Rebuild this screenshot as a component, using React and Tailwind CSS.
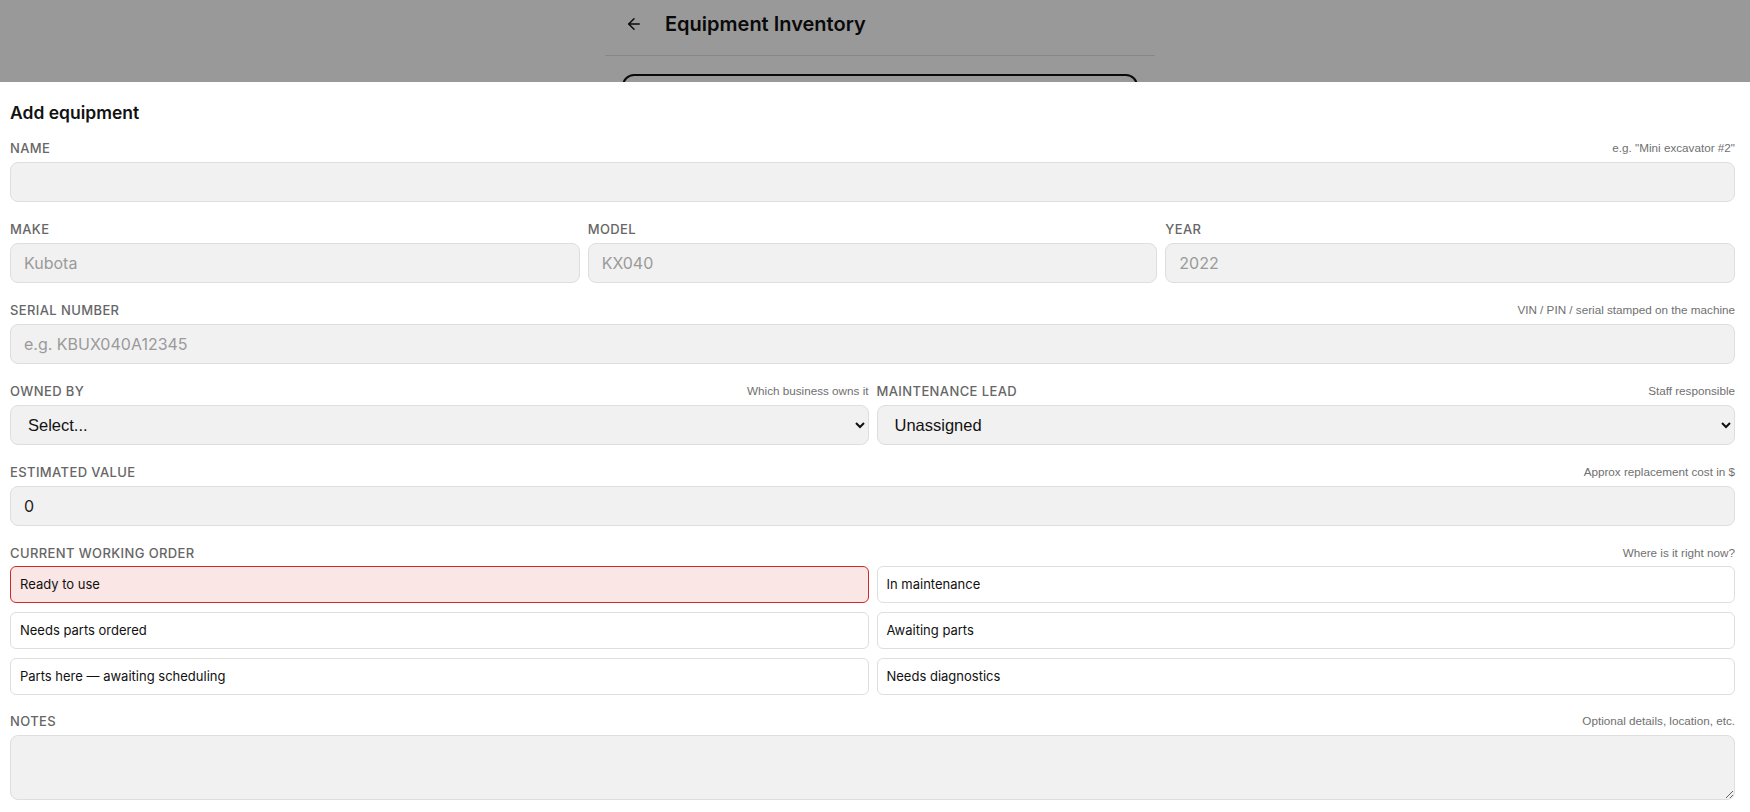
import React from "react";
import { ArrowLeft } from "lucide-react";

const inter = { fontFamily: "Inter, 'Noto Sans', sans-serif" };
const arial = { fontFamily: "'Liberation Sans', Arial, sans-serif" };

function FieldLabel({ label, hint, className = "mb-[6px]" }) {
  return (
    <div className={`flex h-4 items-end justify-between ${className}`}>
      <span
        className="text-[13px] font-medium uppercase leading-4 tracking-[0.03em] text-[#666]"
        style={inter}
      >
        {label}
      </span>
      {hint && (
        <span className="text-[11.7px] leading-4 text-[#707070]" style={arial}>
          {hint}
        </span>
      )}
    </div>
  );
}

function TextInput({ placeholder, value }) {
  return (
    <input
      type="text"
      placeholder={placeholder}
      defaultValue={value}
      className="h-10 w-full rounded-lg border border-[#dedede] bg-[#f1f1f1] px-[13px] text-base text-[#222] placeholder:text-[#9a9a9a] outline-none"
      style={inter}
    />
  );
}

function SelectInput({ options }) {
  return (
    <select
      className="h-10 w-full rounded-lg border border-[#dedede] bg-[#f1f1f1] pl-[13px] pr-2 text-[16.5px] text-[#111] outline-none"
      style={arial}
      defaultValue={options[0]}
    >
      {options.map((o) => (
        <option key={o}>{o}</option>
      ))}
    </select>
  );
}

const statuses = [
  "Ready to use",
  "In maintenance",
  "Needs parts ordered",
  "Awaiting parts",
  "Parts here — awaiting scheduling",
  "Needs diagnostics",
];

export default function App() {
  return (
    <div className="relative h-[812px] w-full overflow-hidden bg-white">
      {/* underlying page */}
      <div className="pl-[10px]">
        <div className="mx-auto w-[550px]">
          <div className="flex h-12 items-center gap-[22px] px-5">
            <ArrowLeft size={18} strokeWidth={2} className="text-[#111]" />
            <h1 className="text-xl font-semibold text-[#111]" style={inter}>
              Equipment Inventory
            </h1>
          </div>
          <div className="mt-[7px] border-t border-[#e2e2e2]" />
          <div className="mx-[17px] mt-[18px] h-40 rounded-xl border-2 border-[#111]" />
        </div>
      </div>

      {/* dim backdrop */}
      <div className="absolute inset-0 bg-black/40" />

      {/* sheet */}
      <div className="absolute inset-x-0 bottom-0 top-[82px] bg-white pl-[10px] pr-[15px] pt-[17px]">
        <h2 className="mb-[13px] text-[17.5px] font-semibold leading-7 text-[#111]" style={inter}>
          Add equipment
        </h2>

        <div className="flex flex-col gap-[19px]">
          <div>
            <FieldLabel label="Name" hint={'e.g. "Mini excavator #2"'} />
            <TextInput />
          </div>

          <div className="grid grid-cols-3 gap-2">
            <div>
              <FieldLabel label="Make" />
              <TextInput placeholder="Kubota" />
            </div>
            <div>
              <FieldLabel label="Model" />
              <TextInput placeholder="KX040" />
            </div>
            <div>
              <FieldLabel label="Year" />
              <TextInput placeholder="2022" />
            </div>
          </div>

          <div>
            <FieldLabel label="Serial number" hint="VIN / PIN / serial stamped on the machine" />
            <TextInput placeholder="e.g. KBUX040A12345" />
          </div>

          <div className="grid grid-cols-2 gap-2">
            <div>
              <FieldLabel label="Owned by" hint="Which business owns it" />
              <SelectInput options={["Select..."]} />
            </div>
            <div>
              <FieldLabel label="Maintenance lead" hint="Staff responsible" />
              <SelectInput options={["Unassigned"]} />
            </div>
          </div>

          <div>
            <FieldLabel label="Estimated value" hint="Approx replacement cost in $" />
            <TextInput value="0" />
          </div>

          <div>
            <FieldLabel label="Current working order" hint="Where is it right now?" className="mb-[5px]" />
            <div className="grid grid-cols-2 gap-x-2 gap-y-[9px]">
              {statuses.map((s, i) => (
                <button
                  key={s}
                  type="button"
                  className={
                    i === 0
                      ? "flex h-[37px] items-center rounded-md border border-[#cf2a2a] bg-[#fbe6e6] px-[9px] text-left text-[13px] text-[#111]"
                      : "flex h-[37px] items-center rounded-md border border-[#dedede] bg-white px-[9px] text-left text-[13px] text-[#111]"
                  }
                  style={inter}
                >
                  {s}
                </button>
              ))}
            </div>
          </div>
        </div>

        <div className="mt-[18px]">
          <FieldLabel label="Notes" hint="Optional details, location, etc." />
          <textarea
            className="block h-[65px] w-full rounded-lg border border-[#dedede] bg-[#f1f1f1] px-[13px] py-2 text-base outline-none"
            style={inter}
          />
        </div>
      </div>
    </div>
  );
}
